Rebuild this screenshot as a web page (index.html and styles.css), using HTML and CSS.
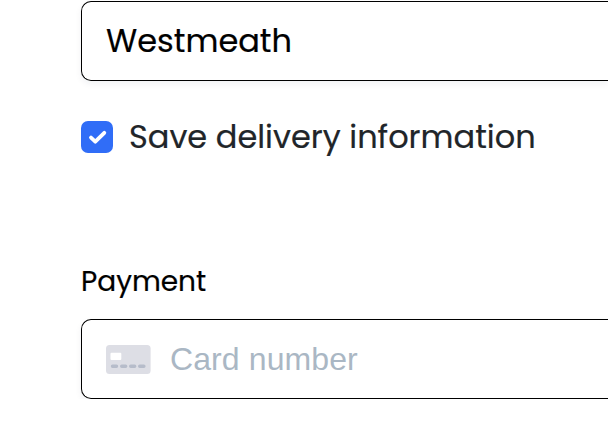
FILE: index.html
```html
<!DOCTYPE html>
<html lang="en">
<head>
<meta charset="utf-8">
<title>Checkout</title>
<link rel="stylesheet" href="styles.css">
</head>
<body>
<form class="checkout">
  <div class="field"><span class="value">Westmeath</span></div>
  <label class="save">
    <svg class="check" width="32" height="32" viewBox="0 0 32 32"><rect width="32" height="32" rx="7" fill="#306df7"/><path d="M10 16.600l4.300 4.100L23.300 11.800" fill="none" stroke="#fff" stroke-width="3.800" stroke-linecap="round" stroke-linejoin="round"/></svg>
    <span class="save-text">Save delivery information</span>
  </label>
  <h2 class="heading">Payment</h2>
  <div class="field card">
    <svg class="card-icon" width="45" height="30" viewBox="0 0 45 30"><rect y="1" width="44.600" height="29" rx="3.500" fill="#dddee5"/><rect x="4.500" y="8.700" width="10.800" height="7.300" rx="1" fill="#fff"/><path d="M6.500 22.300h4M15.700 22.300h4M24.700 22.300h4M33.700 22.300h4.200" stroke="#b6bcca" stroke-width="3.400" stroke-linecap="round"/></svg>
    <span class="placeholder">Card number</span>
  </div>
</form>
</body>
</html>
```
FILE: styles.css
```css
* { box-sizing: border-box; }
body { margin: 0; background: #fff; color: #000; font-family: Poppins, "Open Sans", sans-serif; }
.checkout { padding: 1px 0 0 81px; }
.field { display: flex; align-items: center; height: 80px; padding: 0 24px; border: 1px solid #000; border-right: 0; border-radius: 10px 0 0 10px; box-shadow: 0 3px 7px rgba(18, 42, 66, .06); }
.value { font-size: 32px; line-height: 40px; -webkit-text-stroke: .2px; }
.save { display: flex; align-items: center; gap: 16px; height: 48px; margin-top: 32px; }
.save-text { color: #212529; font-size: 32px; line-height: 48px; white-space: nowrap; -webkit-text-stroke: .2px; }
.heading { height: 40px; margin: 101px 0 17px; font-size: 28px; font-weight: 400; line-height: 40px; -webkit-text-stroke: .2px; }
.card { gap: 19px; }
.placeholder { color: #aab7c4; font: 32px/40px "Liberation Sans", Arial, sans-serif; letter-spacing: .1px; }
```
